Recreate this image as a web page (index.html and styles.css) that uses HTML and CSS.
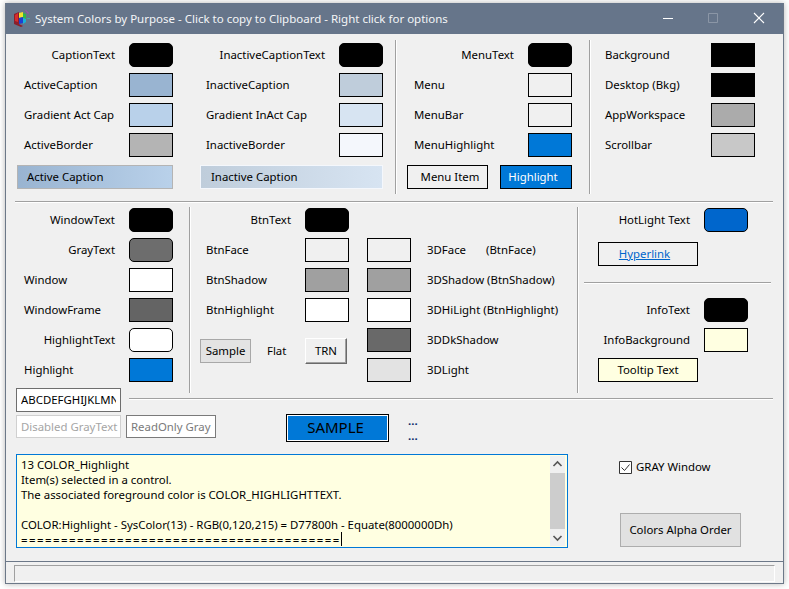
FILE: index.html
```html
<!DOCTYPE html>
<html lang="en">
<head>
<meta charset="utf-8">
<title>System Colors by Purpose</title>
<link rel="stylesheet" href="styles.css">
</head>
<body>
<div class="window">
  <header class="titlebar">
    <svg class="appicon" width="16" height="17" viewBox="0 0 16 17">
      <path fill="#8a1f2c" d="M0 4l5-2v12l4 2-2 1-7-3z"/>
      <path fill="#d92b2b" d="M1 5l3-2v9l-3-1z"/>
      <path fill="#f2e22e" d="M5 3l4-1v5l-4 1z"/>
      <path fill="#2fb84a" d="M9 3l3 1v5l-3-1z"/>
      <path fill="#1f3fd0" d="M5 8l4-1v6l-4 1z"/>
      <path fill="#19b3d8" d="M9 8l3 1v3l-3 2z"/>
      <path fill="#a050b0" d="M11 0l1 0 3 3-1 1z"/>
      <path fill="#3fa8a0" d="M13 8h3v1h-3z"/>
    </svg>
    <span class="title">System Colors by Purpose - Click to copy to Clipboard - Right click for options</span>
    <svg class="caption-icons" width="102" height="14" viewBox="0 0 102 14">
      <path stroke="#fff" d="M0 7.500h10"/>
      <path stroke="#8b96a6" fill="none" d="M45.500 2.500h9v9h-9z"/>
      <path stroke="#fff" stroke-width="1.100" d="M91 2l10 10M101 2l-10 10"/>
    </svg>
  </header>

  <main class="client">
    <section class="top">
      <div class="group g-a">
        <div class="row"><span class="lbl right">CaptionText</span><i class="sw round c-black"></i></div>
        <div class="row"><span class="lbl">ActiveCaption</span><i class="sw c-ac"></i></div>
        <div class="row"><span class="lbl">Gradient Act Cap</span><i class="sw c-gac"></i></div>
        <div class="row"><span class="lbl">ActiveBorder</span><i class="sw c-ab"></i></div>
        <div class="bar bar-active">Active Caption</div>
      </div>
      <div class="group g-b">
        <div class="row"><span class="lbl right">InactiveCaptionText</span><i class="sw round c-black"></i></div>
        <div class="row"><span class="lbl">InactiveCaption</span><i class="sw c-ic"></i></div>
        <div class="row"><span class="lbl">Gradient InAct Cap</span><i class="sw c-gic"></i></div>
        <div class="row"><span class="lbl">InactiveBorder</span><i class="sw c-ib"></i></div>
        <div class="bar bar-inactive">Inactive Caption</div>
      </div>
      <div class="vline v1"></div>
      <div class="group g-c">
        <div class="row"><span class="lbl right">MenuText</span><i class="sw round c-black"></i></div>
        <div class="row"><span class="lbl">Menu</span><i class="sw c-face"></i></div>
        <div class="row"><span class="lbl">MenuBar</span><i class="sw c-face"></i></div>
        <div class="row"><span class="lbl">MenuHighlight</span><i class="sw c-hl"></i></div>
        <div class="menu-pair">
          <span class="box menu-item">Menu Item</span>
          <span class="box menu-hl">Highlight</span>
        </div>
      </div>
      <div class="vline v2"></div>
      <div class="group g-d">
        <div class="row"><span class="lbl">Background</span><i class="sw c-black"></i></div>
        <div class="row"><span class="lbl">Desktop (Bkg)</span><i class="sw c-black"></i></div>
        <div class="row"><span class="lbl">AppWorkspace</span><i class="sw c-app"></i></div>
        <div class="row"><span class="lbl">Scrollbar</span><i class="sw c-scroll"></i></div>
      </div>
    </section>

    <div class="hline h-main"></div>

    <section class="mid">
      <div class="group g-e">
        <div class="row"><span class="lbl right">WindowText</span><i class="sw round c-black"></i></div>
        <div class="row"><span class="lbl right">GrayText</span><i class="sw round c-gray"></i></div>
        <div class="row"><span class="lbl">Window</span><i class="sw c-white"></i></div>
        <div class="row"><span class="lbl">WindowFrame</span><i class="sw c-frame"></i></div>
        <div class="row"><span class="lbl right">HighlightText</span><i class="sw round c-white"></i></div>
        <div class="row"><span class="lbl">Highlight</span><i class="sw c-hl"></i></div>
      </div>
      <div class="vline v3"></div>
      <div class="group g-f">
        <div class="row"><span class="lbl right">BtnText</span><i class="sw round c-black"></i></div>
        <div class="row"><span class="lbl">BtnFace</span><i class="sw c-face"></i></div>
        <div class="row"><span class="lbl">BtnShadow</span><i class="sw c-shadow"></i></div>
        <div class="row"><span class="lbl">BtnHighlight</span><i class="sw c-white"></i></div>
        <div class="sample-row">
          <span class="sample-flat">Sample</span>
          <span class="flat-lbl">Flat</span>
          <span class="trn">TRN</span>
        </div>
      </div>
      <div class="group g-g">
        <div class="row"><i class="sw c-face"></i><span class="lbl3d">3DFace<span class="tab">(BtnFace)</span></span></div>
        <div class="row"><i class="sw c-shadow"></i><span class="lbl3d">3DShadow (BtnShadow)</span></div>
        <div class="row"><i class="sw c-white"></i><span class="lbl3d">3DHiLight (BtnHighlight)</span></div>
        <div class="row"><i class="sw c-dk"></i><span class="lbl3d">3DDkShadow</span></div>
        <div class="row"><i class="sw c-light"></i><span class="lbl3d">3DLight</span></div>
      </div>
      <div class="vline v4"></div>
      <div class="g-h">
        <div class="row"><span class="lbl right">HotLight Text</span><i class="sw round c-hot"></i></div>
        <div class="box link-box"><a href="#">Hyperlink</a></div>
        <div class="hline h-side"></div>
        <div class="row"><span class="lbl right">InfoText</span><i class="sw round c-black"></i></div>
        <div class="row"><span class="lbl right">InfoBackground</span><i class="sw c-info"></i></div>
        <div class="box tip-box">Tooltip Text</div>
      </div>
    </section>

    <section class="bottom">
      <div class="entry-row">
        <span class="entry"><span class="entry-text">ABCDEFGHIJKLMNOP</span></span>
        <div class="hline h-entry"></div>
      </div>
      <div class="states-row">
        <span class="state disabled">Disabled GrayText</span>
        <span class="state readonly">ReadOnly Gray</span>
        <span class="sample-big">SAMPLE</span>
        <span class="dots"><b>...</b><b>...</b></span>
      </div>
      <div class="text-row">
        <div class="memo">
          <div class="memo-text">
            <div>13 COLOR_Highlight</div>
            <div>Item(s) selected in a control.</div>
            <div>The associated foreground color is COLOR_HIGHLIGHTTEXT.</div>
            <div>&nbsp;</div>
            <div>COLOR:Highlight - SysColor(13) - RGB(0,120,215) = D77800h - Equate(8000000Dh)</div>
            <div class="eq">========================================<span class="caret"></span></div>
          </div>
          <div class="scroll">
            <svg width="15" height="17" viewBox="0 0 15 17"><path d="M3.500 10l4-4 4 4" fill="none" stroke="#555" stroke-width="1.600"/></svg>
            <div class="thumb"></div>
            <svg width="15" height="17" viewBox="0 0 15 17"><path d="M3.500 7l4 4 4-4" fill="none" stroke="#555" stroke-width="1.600"/></svg>
          </div>
        </div>
        <div class="side">
          <label class="check">
            <svg width="13" height="13" viewBox="0 0 13 13"><path d="M.500.500h12v12h-12z" fill="#fff" stroke="#333"/><path d="M2.500 6.500l3 3 5-6" fill="none" stroke="#333"/></svg>
            <span>GRAY Window</span>
          </label>
          <span class="alpha">Colors Alpha Order</span>
        </div>
      </div>
    </section>

    <div class="status-rule"></div>
    <div class="status"></div>
  </main>
</div>
</body>
</html>
```

FILE: styles.css
```css
* { box-sizing: border-box; }
html, body { margin: 0; height: 100%; background: #fff; overflow: hidden; }
body { font: 11.4px/16px "Noto Sans", "Open Sans", sans-serif; color: #000; }

.window {
  margin: 3px 0 0 5px;
  width: 779px;
  height: 581px;
  border: 1px solid #6c7888;
  border-top: 0;
  display: flex;
  flex-direction: column;
  box-shadow: 0 0 6px rgba(0,0,0,.3);
  background: #f0f0f0;
}

.titlebar {
  height: 31px;
  flex: none;
  background: #66758a;
  color: #fff;
  display: flex;
  align-items: center;
  padding: 0 18px 0 8px;
}
.appicon { flex: none; }
.title { margin-left: 5px; white-space: nowrap; color: #f4f6f8; font-size: 11.5px; }
.caption-icons { margin-left: auto; flex: none; margin-top: -1px; }

.client { flex: 1; display: flex; flex-direction: column; min-height: 0; }

.top { display: flex; height: 167px; padding: 6px 0 0 11px; flex: none; }
.group { display: flex; flex-direction: column; gap: 6px; padding-top: 3px; flex: none; }
.row { display: flex; align-items: center; height: 24px; flex: none; }
.lbl { flex: 1; padding-left: 7px; white-space: nowrap; }
.g-b .lbl, .g-f .lbl { padding-left: 6px; }
.g-d .lbl { padding-left: 0; }
.group .lbl.right, .g-h .lbl.right { text-align: right; padding: 0 14px 0 0; }
.sw { display: block; flex: none; width: 44px; height: 24px; border: 1px solid #000; }
.sw.round { border-radius: 5px; }

.c-black { background: #000; }
.c-ac { background: #99b4d1; }
.c-gac { background: #b9d1ea; }
.c-ab { background: #b4b4b4; }
.c-ic { background: #bfcddb; }
.c-gic { background: #d7e4f2; }
.c-ib { background: #f4f7fc; }
.c-face { background: #f0f0f0; }
.c-hl { background: #0078d7; }
.c-app { background: #ababab; }
.c-scroll { background: #c8c8c8; }
.c-gray { background: #6d6d6d; }
.c-white { background: #fff; }
.c-frame { background: #646464; }
.c-shadow { background: #a0a0a0; }
.c-dk { background: #696969; }
.c-light { background: #e3e3e3; }
.c-hot { background: #0066cc; }
.c-info { background: #ffffe1; }

.g-a { width: 156px; }
.g-b { width: 183px; margin-left: 27px; }
.g-c { width: 165px; }
.g-d { width: 150px; }

.bar { height: 24px; margin-top: 2px; padding-left: 9px; line-height: 21px; white-space: nowrap; }
.bar-active { background: linear-gradient(90deg, #99b4d1, #b9d1ea); border: 1px solid #b4b4b4; }
.bar-inactive { background: linear-gradient(90deg, #bfcddb, #d7e4f2); border: 1px solid #f4f7fc; padding-left: 10px; }

.vline { flex: none; width: 2px; background: linear-gradient(90deg, #a0a0a0 50%, #fff 50%); }
.v1 { height: 154px; margin: 0 10px 0 12px; }
.v2 { height: 154px; margin: 0 14px 0 17px; }
.v3 { height: 186px; margin: 0 9px 0 16px; }
.v4 { height: 186px; margin: 0 19px 0 15px; }

.menu-pair { display: flex; justify-content: space-between; margin-top: 2px; }
.box { display: flex; align-items: center; justify-content: center; height: 24px; border: 1px solid #000; white-space: nowrap; }
.menu-item { width: 81px; padding-left: 5px; }
.menu-hl { width: 72px; background: #0078d7; color: #fff; padding-right: 6px; }

.hline { height: 2px; flex: none; background: linear-gradient(#a0a0a0 50%, #fff 50%); }
.h-main { margin: 0 10px 0 9px; }

.mid { display: flex; height: 186px; padding: 4px 0 0 11px; flex: none; }
.mid .vline { margin-top: 0; }
.g-e { width: 156px; padding-top: 1px; }
.g-f { width: 149px; padding-top: 1px; }
.g-g { width: 195px; margin-left: 18px; padding-top: 31px; }
.lbl3d { padding-left: 16px; white-space: nowrap; }
.tab { margin-left: 20px; }

.sample-row { display: flex; align-items: center; height: 26px; margin-top: 10px; }
.sample-flat { width: 51px; height: 24px; background: #e3e3e3; border: 1px solid #a8a8a8; display: flex; align-items: center; justify-content: center; }
.flat-lbl { margin-left: 16px; }
.trn {
  margin-left: auto;
  margin-right: 2px;
  width: 42px;
  height: 26px;
  border: 1px solid;
  border-color: #fff #6a6a6a #6a6a6a #fff;
  box-shadow: inset -1px -1px 0 #a0a0a0;
  display: flex; align-items: center; justify-content: center;
}

.g-h { width: 150px; flex: none; padding-top: 1px; display: flex; flex-direction: column; }
.g-h .row + .row { margin-top: 6px; }
.link-box { width: 100px; margin-top: 10px; padding-right: 7px; }
.link-box a { color: #0066cc; }
.h-side { width: 187px; margin: 16px 0 14px -14px; }
.tip-box { width: 100px; margin-top: 6px; background: #ffffe1; }

.bottom { flex: 1; display: flex; flex-direction: column; padding: 0 0 0 10px; min-height: 0; margin-top: -1px; }
.entry-row { display: flex; align-items: center; height: 24px; flex: none; }
.entry { width: 105px; height: 24px; border: 1px solid #6e6e6e; background: #fff; padding: 3px 4px 0; }
.entry-text { display: block; overflow: hidden; white-space: nowrap; }
.h-entry { width: 644px; margin: -3px 0 0 8px; }

.states-row { display: flex; align-items: flex-start; height: 40px; margin-top: 2px; flex: none; }
.state { height: 23px; margin-top: 1px; background: #fff; padding: 3px 0 0 4px; white-space: nowrap; color: #8c8c8c; }
.disabled { width: 105px; border: 1px solid #d0d0d0; color: #a5a5a5; }
.readonly { width: 90px; margin-left: 5px; border: 1px solid #7a7a7a; color: #7a7a7a; }
.sample-big {
  width: 103px;
  height: 28px;
  margin-left: 70px;
  padding-right: 4px;
  background: #0078d7;
  border: 1px solid #000;
  outline: 1px solid #fff;
  outline-offset: -2px;
  font-size: 15px;
  line-height: 25px;
  text-align: center;
}
.dots { display: flex; flex-direction: column; margin: -1px 0 0 19px; color: #0a2a6a; line-height: 15px; }
.dots b { display: block; font-weight: 700; }

.text-row { display: flex; flex: none; height: 94px; }
.memo { width: 552px; height: 94px; border: 1px solid #0078d7; background: #ffffe1; display: flex; padding: 1px; }
.memo-text { flex: 1; padding: 1px 0 0 3px; line-height: 15px; white-space: nowrap; overflow: hidden; }
.eq { letter-spacing: 1.48px; }
.caret { display: inline-block; width: 1px; height: 15px; background: #000; vertical-align: -3px; }
.scroll { width: 15px; flex: none; background: #f0f0f0; display: flex; flex-direction: column; margin-right: 1px; }
.scroll svg { display: block; flex: none; background: #f0f0f0; }
.thumb { flex: 1; background: #cdcdcd; }

.side { flex: none; width: 175px; display: flex; flex-direction: column; align-items: flex-start; padding: 5px 0 0 51px; }
.check { display: flex; align-items: center; gap: 4px; white-space: nowrap; }
.check svg { flex: none; }
.alpha { margin-top: 38px; margin-left: 1px; width: 121px; height: 34px; flex: none; background: #e1e1e1; border: 1px solid #adadad; display: flex; align-items: center; justify-content: center; white-space: nowrap; }

.status-rule { flex: none; height: 1px; background: #6c7888; }
.status {
  flex: none;
  height: 17px;
  margin: 3px 8px 1px 8px;
  border: 1px solid;
  border-color: #a0a0a0 #fff #fff #a0a0a0;
}
```
